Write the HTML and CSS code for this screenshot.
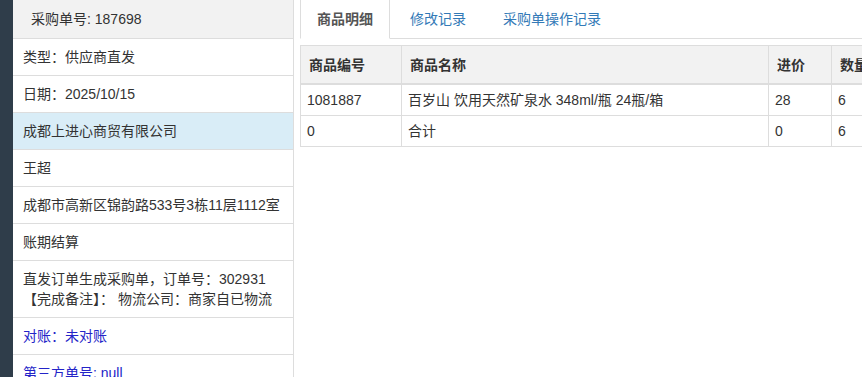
FILE: index.html
```html
<!DOCTYPE html>
<html lang="zh-CN">
<head>
    <meta charset="UTF-8">
    <meta name="viewport" content="width=device-width, initial-scale=1.0">
    <title>采购单详情</title>
    <link rel="stylesheet" href="styles.css">
</head>
<body>
    <div class="side-strip"></div>

    <!-- 左侧采购单信息 -->
    <ul class="info-list">
        <li class="info-head">采购单号: 187698</li>
        <li>类型：供应商直发</li>
        <li>日期：2025/10/15</li>
        <li class="info-active">成都上进心商贸有限公司</li>
        <li>王超</li>
        <li>成都市高新区锦韵路533号3栋11层1112室</li>
        <li>账期结算</li>
        <li>直发订单生成采购单，订单号：302931【完成备注】： 物流公司：商家自已物流</li>
        <li class="info-link">对账：未对账</li>
        <li class="info-link">第三方单号: null</li>
    </ul>

    <div class="main">
        <ul class="tabs">
            <li class="active"><a href="#">商品明细</a></li>
            <li><a href="#">修改记录</a></li>
            <li><a href="#">采购单操作记录</a></li>
        </ul>

        <table class="goods">
            <thead>
                <tr>
                    <th class="col-code">商品编号</th>
                    <th class="col-name">商品名称</th>
                    <th class="col-price">进价</th>
                    <th class="col-num">数量</th>
                    <th class="col-num">金额</th>
                </tr>
            </thead>
            <tbody>
                <tr>
                    <td>1081887</td>
                    <td>百岁山 饮用天然矿泉水 348ml/瓶 24瓶/箱</td>
                    <td>28</td>
                    <td>6</td>
                    <td>168</td>
                </tr>
                <tr>
                    <td>0</td>
                    <td>合计</td>
                    <td>0</td>
                    <td>6</td>
                    <td>168</td>
                </tr>
            </tbody>
        </table>
    </div>
</body>
</html>
```

FILE: styles.css
```css
body {
    margin: 0;
    font-family: "Liberation Sans", "Noto Sans CJK SC", sans-serif;
    font-size: 14px;
    line-height: 20px;
    color: #333;
    background-color: #fff;
    display: flex;
    align-items: flex-start;
    height: 377px;
    overflow: hidden;
}

.side-strip {
    width: 13px;
    height: 100%;
    background-color: #2f3d4a;
    flex-shrink: 0;
}

/* 左侧信息列表 */
.info-list {
    list-style: none;
    margin: 0;
    padding: 0;
    width: 280px;
    border-right: 1px solid #ddd;
    flex-shrink: 0;
    min-height: 100%;
}

.info-list li {
    padding: 8px 6px 8px 10px;
    border-bottom: 1px solid #ddd;
}

.info-list .info-head {
    background-color: #f2f2f2;
    padding: 9px 10px 9px 18px;
}

.info-list .info-active {
    background-color: #d9edf7;
}

.info-list .info-link {
    color: #2424c8;
}

/* 右侧内容 */
.main {
    flex: 1;
    min-width: 0;
    margin-left: 6px;
    overflow: hidden;
}

.tabs {
    list-style: none;
    margin: -1px 0 0;
    padding: 0;
    display: flex;
    border-bottom: 1px solid #ddd;
}

.tabs li {
    margin-bottom: -1px;
    margin-right: 3px;
}

.tabs a {
    display: block;
    padding: 9px 16px;
    border: 1px solid transparent;
    color: #337ab7;
    text-decoration: none;
}

.tabs .active a {
    color: #555;
    font-weight: bold;
    border-color: #ddd;
    border-bottom-color: #fff;
    background-color: #fff;
}

.goods {
    margin-top: 6px;
    border-collapse: collapse;
    table-layout: fixed;
    width: 726px;
    border: 1px solid #ddd;
}

.goods th,
.goods td {
    border: 1px solid #ddd;
    text-align: left;
    white-space: nowrap;
}

.goods th {
    background-color: #f2f2f2;
    padding: 9px 8px 8px;
    border-bottom-width: 2px;
}

.goods td {
    padding: 5px 6px;
}

.col-code {
    width: 84px;
}

.col-name {
    width: 350px;
}

.col-price {
    width: 46px;
}

.col-num {
    width: 80px;
}
```
